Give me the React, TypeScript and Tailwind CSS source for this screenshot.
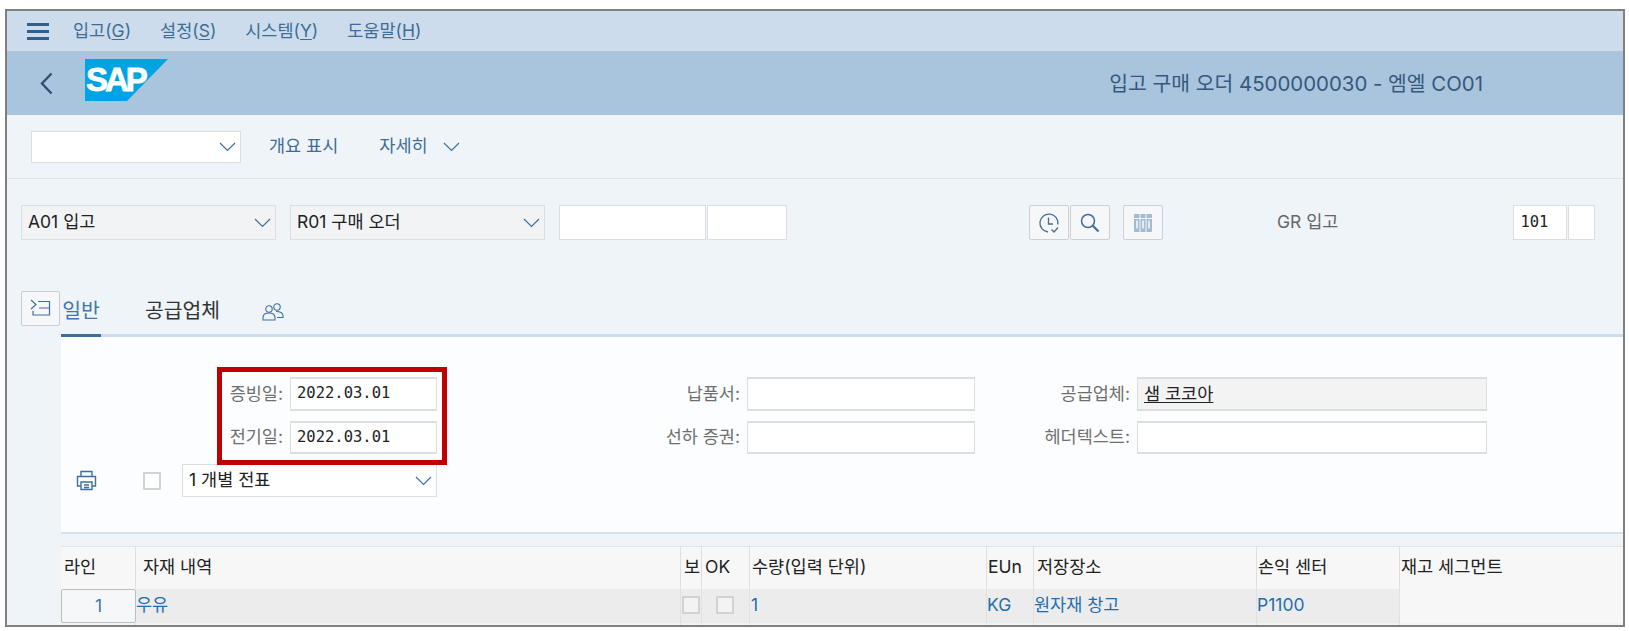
import React from "react";

const sans = "font-['Inter','Noto_Sans_CJK_KR',sans-serif]";
const mono = "font-['DejaVu_Sans_Mono','Noto_Sans_CJK_KR',monospace]";

const Chevron = ({ className = "" }: { className?: string }) => (
    <svg className={className} width="17" height="10" viewBox="0 0 17 10" fill="none" stroke="#3f6f9e" strokeWidth="1.2">
        <path d="M1 1l7.5 7.5L16 1" />
    </svg>
);

const MenuItem = ({ label, hot, className = "" }: { label: string; hot: string; className?: string }) => (
    <span className={`text-[17.5px] text-[#3e6d98] ${className}`}>
        {label}(<span className="underline underline-offset-2">{hot}</span>)
    </span>
);

const SelectBox = ({ text, className = "" }: { text?: string; className?: string }) => (
    <div className={`flex items-center justify-between border border-[#dcdfe2] pl-[6px] pr-[4px] text-[17.5px] text-[#222222] ${className}`}>
        <span>{text}</span>
        <Chevron />
    </div>
);

const IconBtn = ({ children, className = "" }: { children: React.ReactNode; className?: string }) => (
    <div className={`flex h-[35px] w-[40px] items-center justify-center rounded-[2px] border border-[#cdd1d5] bg-[#f6f7f8] ${className}`}>
        {children}
    </div>
);

const FieldLabel = ({ children }: { children: React.ReactNode }) => (
    <div className="flex items-center justify-end pr-[7px] text-[17.5px] text-[#6f6f6f]">{children}</div>
);

const FieldInput = ({ children, className = "" }: { children?: React.ReactNode; className?: string }) => (
    <div className={`flex items-center border border-[#dedede] border-t-2 border-b-2 px-[6px] text-[#222222] ${className}`}>
        {children}
    </div>
);

const HeadCell = ({ children, className = "" }: { children?: React.ReactNode; className?: string }) => (
    <div className={`flex items-center border-r border-[#dfdfdf] bg-[#f7f7f7] pb-[2px] text-[17.5px] text-[#222222] ${className}`}>{children}</div>
);

const BodyCell = ({ children, className = "" }: { children?: React.ReactNode; className?: string }) => (
    <div className={`flex items-center border-r border-[#e2e2e2] bg-[#ececec] pb-[2px] text-[17.5px] text-[#1f6fb0] ${className}`}>{children}</div>
);

const Check = ({ className = "" }: { className?: string }) => (
    <div className={`h-[18px] w-[18px] rounded-[1px] border-2 border-[#d2d2d2] ${className}`} />
);

const App = () => {
    return (
        <div className={`h-[631px] w-[1629px] overflow-hidden bg-white pt-[9px] pl-[5px] ${sans}`}>
            <div className="flex h-[618px] w-[1620px] flex-col overflow-hidden border-2 border-[#808080] bg-[#eff4f9]">
                {/* menu bar */}
                <div className="flex h-[41px] shrink-0 items-center border-b border-[#b7c2cd] bg-[#ccdcec] pl-[20px]">
                    <div className="flex w-[22px] flex-col gap-[4px]">
                        <div className="h-[3px] bg-[#2f5f8c]" />
                        <div className="h-[3px] bg-[#2f5f8c]" />
                        <div className="h-[3px] bg-[#2f5f8c]" />
                    </div>
                    <MenuItem label="입고" hot="G" className="ml-[24px]" />
                    <MenuItem label="설정" hot="S" className="ml-[29px]" />
                    <MenuItem label="시스템" hot="Y" className="ml-[29px]" />
                    <MenuItem label="도움말" hot="H" className="ml-[29px]" />
                </div>

                {/* header */}
                <div className="flex h-[63px] shrink-0 items-center bg-[#a9c5de] pl-[33px] pr-[140px]">
                    <svg width="13" height="23" viewBox="0 0 13 23" fill="none" stroke="#2b5272" strokeWidth="2.4">
                        <path d="M11.5 1.5L2 11.5l9.5 10" />
                    </svg>
                    <svg className="ml-[32px] mb-[7px]" width="83" height="42" viewBox="0 0 83 42">
                        <polygon points="0,0 83,0 42,42 0,42" fill="#00a4e4" />
                        <text x="1" y="32" fill="#ffffff" stroke="#ffffff" strokeWidth="0.8" fontFamily="Liberation Sans" fontWeight="700" fontSize="33" letterSpacing="-3">SAP</text>
                    </svg>
                    <div className="ml-auto mt-[2px] text-[20.4px] text-[#34597c]">입고 구매 오더 4500000030 - 엠엘 CO01</div>
                </div>

                {/* toolbar */}
                <div className="flex h-[64px] shrink-0 items-center border-b border-[#dfe4e9] pl-[24px]">
                    <SelectBox className="h-[32px] w-[210px] border-[#d6d9dc] bg-white" />
                    <span className="ml-[28px] text-[17.5px] text-[#3e6d98]">개요 표시</span>
                    <span className="ml-[41px] text-[17.5px] text-[#3e6d98]">자세히</span>
                    <Chevron className="ml-[15px]" />
                </div>

                {/* selection row */}
                <div className="mt-[26px] flex h-[35px] shrink-0 items-center pl-[14px]">
                    <SelectBox text="A01 입고" className="h-full w-[255px] bg-[#f2f3f5]" />
                    <SelectBox text="R01 구매 오더" className="ml-[14px] h-full w-[255px] bg-[#f2f3f5]" />
                    <div className="ml-[14px] h-full w-[147px] border border-[#dcdfe2] bg-white" />
                    <div className="ml-px h-full w-[80px] border border-[#dcdfe2] bg-white" />
                    <IconBtn className="ml-[242px]">
                        <svg width="22" height="22" viewBox="0 0 22 22" fill="none" stroke="#3f6f9e" strokeWidth="1.3">
                            <path d="M19.8 12.5A9 9 0 1 0 10 20" />
                            <path d="M10.5 5.500v6.500H15" />
                            <path d="M13.500 17.500l2.500 2.500 4-4.500" />
                        </svg>
                    </IconBtn>
                    <IconBtn className="ml-[1px]">
                        <svg width="20" height="20" viewBox="0 0 20 20" fill="none" stroke="#3f6f9e" strokeWidth="1.5">
                            <circle cx="8" cy="8" r="6.5" />
                            <path d="M12.8 12.800L18.500 18.500" strokeWidth="2.2" />
                        </svg>
                    </IconBtn>
                    <IconBtn className="ml-[13px]">
                        <svg width="18" height="18" viewBox="0 0 18 18" fill="none">
                            <rect x="0" y="0" width="18" height="18" rx="1" fill="#a3bbd2" />
                            <path d="M6 0v18M12 0v18" stroke="#f6f7f8" strokeWidth="1" />
                            <path d="M0 4.500h18" stroke="#f6f7f8" strokeWidth="1" />
                            <path d="M3 6.500v8M9 6.500v8M15 6.500v8" stroke="#f6f7f8" strokeWidth="1.6" />
                        </svg>
                    </IconBtn>
                    <span className="ml-[114px] text-[17.5px] text-[#666666]">GR 입고</span>
                    <div className={`ml-[175px] flex h-full w-[54px] items-center border border-[#dcdfe2] bg-white pl-[6px] text-[15.5px] text-[#222222] ${mono}`}>101</div>
                    <div className="ml-px h-full w-[27px] border border-[#dcdfe2] bg-white" />
                </div>

                {/* tabs */}
                <div className="mt-[51px] flex h-[46px] shrink-0">
                    <div className="ml-[14px] mr-px h-[35px] w-[39px] shrink-0 rounded-[2px] border border-[#c8ccd0] bg-[#f6f7f8] pt-[7px] pl-[8px]">
                        <svg width="21" height="19" viewBox="0 0 21 19" fill="none" stroke="#3f6f9e" strokeWidth="1.2">
                            <path d="M1 1l5 4.500L1 10" />
                            <path d="M8 2.500h11.500v13.500H3v-4M9 9h10.500" />
                        </svg>
                    </div>
                    <div className="flex flex-1 border-b-[3px] border-[#cddded]">
                        <div className="mb-[-3px] flex w-[40px] items-start justify-center border-b-[3px] border-[#3c6d9c] pt-[5px] text-[20.400px] text-[#3f78ad]">일반</div>
                        <div className="ml-[44px] pt-[5px] text-[20.400px] text-[#333333]">공급업체</div>
                        <svg className="ml-[42px] mt-[11px]" width="22" height="20" viewBox="0 0 22 20" fill="none" stroke="#3f6f9e" strokeWidth="1.1">
                            <circle cx="7" cy="7" r="3.200" />
                            <circle cx="15" cy="5" r="3.200" />
                            <path d="M1 18v-2.500C1 12.500 3.500 11 7 11s6 1.500 6 4.500V18z" />
                            <path d="M14 9.500c4 0 7 1.500 7 4.500v1.500h-6" />
                        </svg>
                    </div>
                </div>

                {/* form panel */}
                <div className="relative ml-[54px] h-[197px] shrink-0 border-b-2 border-[#d6e3ee] bg-[#fcfdfe] pt-[40px]">
                    <div className="grid grid-cols-[229px_147px_310px_228px_162px_350px] grid-rows-[34px_33px] gap-y-[10px]">
                        <FieldLabel>증빙일:</FieldLabel>
                        <FieldInput className={`bg-white text-[15.5px] ${mono}`}>2022.03.01</FieldInput>
                        <FieldLabel>납품서:</FieldLabel>
                        <FieldInput className="bg-white" />
                        <FieldLabel>공급업체:</FieldLabel>
                        <FieldInput className="bg-[#f3f3f3] text-[17.5px]"><span className="underline underline-offset-2">샘 코코아</span></FieldInput>

                        <FieldLabel>전기일:</FieldLabel>
                        <FieldInput className={`bg-white text-[15.5px] ${mono}`}>2022.03.01</FieldInput>
                        <FieldLabel>선하 증권:</FieldLabel>
                        <FieldInput className="bg-white" />
                        <FieldLabel>헤더텍스트:</FieldLabel>
                        <FieldInput className="bg-white" />
                    </div>
                    <div className="mt-[10px] flex h-[33px] items-center pl-[15px]">
                        <svg width="21" height="21" viewBox="0 0 21 21" fill="none" stroke="#3f6f9e" strokeWidth="1.4">
                            <path d="M5 6V1.500h11V6" />
                            <path d="M5 16H1.500V6.500h18V16H16" />
                            <path d="M5 12h11v7.500H5zM8 15h5M8 17.500h5" />
                        </svg>
                        <Check className="ml-[46px] bg-white" />
                        <SelectBox text="1 개별 전표" className="ml-[21px] h-full w-[255px] bg-white" />
                    </div>
                    <div className="absolute left-[156px] top-[30px] h-[98px] w-[230px] border-[5px] border-[#c00000]" />
                </div>

                {/* table */}
                <div className="ml-[54px] mt-[12px] grid grid-cols-[75px_545px_21px_48px_237px_47px_223px_143px_1fr] grid-rows-[42px_34px_4px] border-t border-[#e3e3e3]">
                    <HeadCell className="pl-[3px]">라인</HeadCell>
                    <HeadCell className="pl-[7px]">자재 내역</HeadCell>
                    <HeadCell className="pl-[3px]">보</HeadCell>
                    <HeadCell className="pl-[3px]">OK</HeadCell>
                    <HeadCell className="pl-[2px]">수량(입력 단위)</HeadCell>
                    <HeadCell className="pl-[1px]">EUn</HeadCell>
                    <HeadCell className="pl-[3px]">저장장소</HeadCell>
                    <HeadCell className="pl-[1px]">손익 센터</HeadCell>
                    <HeadCell className="border-r-0 pl-[1px]">재고 세그먼트</HeadCell>

                    <div className="flex items-center justify-center rounded-[2px] border border-[#bdbdbd] bg-[#f6f7f8] text-[17.5px] text-[#3f78ad]">1</div>
                    <BodyCell className="pl-0">우유</BodyCell>
                    <BodyCell className="pl-px"><Check className="bg-[#f3f3f3]" /></BodyCell>
                    <BodyCell className="pl-[14px]"><Check className="bg-[#f3f3f3]" /></BodyCell>
                    <BodyCell className="pl-[1px]">1</BodyCell>
                    <BodyCell className="pl-0">KG</BodyCell>
                    <BodyCell className="pl-0">원자재 창고</BodyCell>
                    <BodyCell className="pl-0">P1100</BodyCell>
                    <div className="bg-[#f7f7f7]" />

                    <div className="border-r border-[#dfdfdf]" />
                    <div className="border-r border-[#dfdfdf]" />
                    <div className="border-r border-[#dfdfdf]" />
                    <div className="border-r border-[#dfdfdf]" />
                    <div className="border-r border-[#dfdfdf]" />
                    <div className="border-r border-[#dfdfdf]" />
                    <div className="border-r border-[#dfdfdf]" />
                    <div className="border-r border-[#dfdfdf]" />
                    <div />
                </div>
            </div>
        </div>
    );
};

export default App;
